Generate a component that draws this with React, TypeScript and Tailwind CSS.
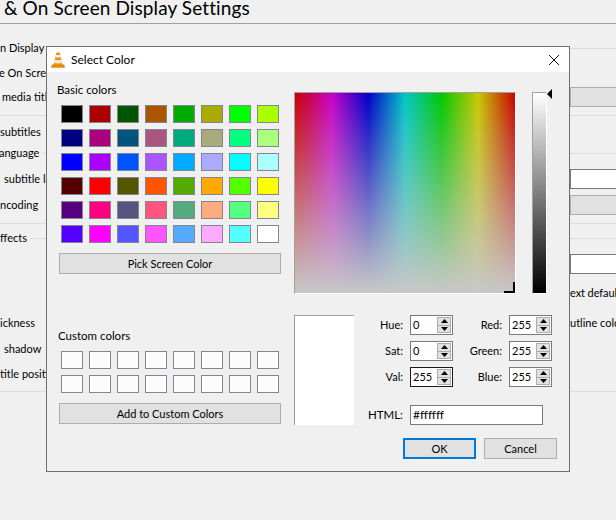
const basicColors = [
  ['#000000', '#aa0000', '#005500', '#aa5500', '#00aa00', '#aaaa00', '#00ff00', '#aaff00'],
  ['#00007f', '#aa007f', '#00557f', '#aa557f', '#00aa7f', '#aaaa7f', '#00ff7f', '#aaff7f'],
  ['#0000ff', '#aa00ff', '#0055ff', '#aa55ff', '#00aaff', '#aaaaff', '#00ffff', '#aaffff'],
  ['#550000', '#ff0000', '#555500', '#ff5500', '#55aa00', '#ffaa00', '#55ff00', '#ffff00'],
  ['#55007f', '#ff007f', '#55557f', '#ff557f', '#55aa7f', '#ffaa7f', '#55ff7f', '#ffff7f'],
  ['#5500ff', '#ff00ff', '#5555ff', '#ff55ff', '#55aaff', '#ffaaff', '#55ffff', '#ffffff'],
];

const FONT = "font-['Lato','Noto_Sans',sans-serif]";

function Swatch({ color }: { color: string }) {
  return <div className="h-[18px] w-[22px] border border-[#85858d]" style={{ backgroundColor: color }} />;
}

function PushButton({ label, wide, focused }: { label: string; wide?: boolean; focused?: boolean }) {
  return (
    <div
      className={`flex h-[21px] items-center justify-center bg-[#e1e1e1] pt-px text-[11px] text-black ${
        wide ? 'w-[222px]' : 'w-[73px]'
      } ${focused ? 'border-2 border-[#0078d7]' : 'border border-[#adadad]'}`}
    >
      {label}
    </div>
  );
}

function SpinBox({ value, focused }: { value: string; focused?: boolean }) {
  return (
    <div
      className={`flex h-5 w-[43px] items-center justify-between border bg-white pl-[2px] pr-px text-[11px] ${
        focused ? 'border-[#1a1a1a]' : 'border-[#7a7a7a]'
      }`}
    >
      <span>{value}</span>
      <div className="flex h-4 w-[14px] flex-col divide-y divide-[#adadad] border border-[#adadad] bg-[#e1e1e1]">
        <div className="flex flex-1 items-center justify-center">
          <svg width="7" height="4" viewBox="0 0 7 4"><path d="M3.5 0L7 4H0z" fill="#000" /></svg>
        </div>
        <div className="flex flex-1 items-center justify-center">
          <svg width="7" height="4" viewBox="0 0 7 4"><path d="M0 0h7L3.5 4z" fill="#000" /></svg>
        </div>
      </div>
    </div>
  );
}

function SpinRow({ label, value, labelWidth, focused }: { label: string; value: string; labelWidth: string; focused?: boolean }) {
  return (
    <div className="flex items-center gap-[7px]">
      <span className={`${labelWidth} text-right text-[11px]`}>{label}</span>
      <SpinBox value={value} focused={focused} />
    </div>
  );
}

function VlcCone() {
  return (
    <svg width="14" height="16" viewBox="0 0 14 16">
      <path d="M1 12.5h12l1 2.5q0 .8-.8.8H.8Q0 15.8 0 15z" fill="#e8860f" />
      <path d="M5.5.5h3L11.5 13q-4.5 1.4-9 0z" fill="#f28c0c" />
      <path d="M4.9 3h4.2l.6 2.5H4.3z" fill="#f3efe9" />
      <path d="M3.7 8h6.6l.7 3q-4 .8-8 0z" fill="#efebe6" />
    </svg>
  );
}

function Divider({ className }: { className: string }) {
  return <div className={`h-px bg-[#dcdcdc] ${className}`} />;
}

// The settings window behind the dialog, its labels run on under the dialog
function SettingsBehind() {
  return (
    <div className="flex h-[520px] w-[616px] flex-col overflow-hidden bg-[#f0f0f0] text-[11px] text-black">
      <div className="h-[24px] shrink-0 border-b border-[#a0a0a0] pl-1 text-[19px] leading-[16px] tracking-[0.1px] whitespace-nowrap">
        &amp; On Screen Display Settings
      </div>

      <div className="mt-[15px] flex h-[18px] shrink-0 items-center">
        <span className="whitespace-nowrap">n Display</span>
        <Divider className="ml-[3px] flex-1" />
      </div>
      <div className="mt-[7px] -ml-px flex h-[18px] shrink-0 items-center whitespace-nowrap">e On Screen</div>
      <div className="mt-[5px] flex h-5 shrink-0 items-center justify-between pl-[2px]">
        <span className="whitespace-nowrap">media title</span>
        <div className="h-5 w-[46px] border border-r-0 border-[#adadad] bg-[#e1e1e1]" />
      </div>
      <Divider className="mt-[8px] shrink-0" />

      <div className="mt-[8px] flex h-4 shrink-0 items-center whitespace-nowrap">subtitles</div>
      <div className="mt-[5px] flex h-4 shrink-0 items-center">
        <span className="-ml-px whitespace-nowrap">anguage</span>
        <Divider className="ml-[3px] flex-1" />
      </div>
      <div className="mt-[8px] flex h-5 shrink-0 items-center justify-between pl-[4px]">
        <span className="whitespace-nowrap">subtitle language</span>
        <div className="h-5 w-[46px] border border-r-0 border-[#7a7a7a] bg-white" />
      </div>
      <div className="mt-[6px] flex h-5 shrink-0 items-center justify-between">
        <span className="whitespace-nowrap">ncoding</span>
        <div className="h-5 w-[46px] border border-r-0 border-[#adadad] bg-[#e1e1e1]" />
      </div>
      <Divider className="mt-[8px] shrink-0" />
      <div className="mt-[6px] flex h-4 shrink-0 items-center">
        <span className="whitespace-nowrap">ffects</span>
        <Divider className="ml-[3px] flex-1" />
      </div>
      <div className="mt-[8px] flex h-5 shrink-0 justify-end">
        <div className="h-5 w-[46px] border border-r-0 border-[#7a7a7a] bg-white" />
      </div>
      <div className="mt-[11px] flex h-4 shrink-0 items-center pl-[570px] tracking-[-0.1px] whitespace-nowrap">ext default</div>
      <div className="mt-[14px] flex h-4 shrink-0 items-center">
        <span className="w-[570px] shrink-0 whitespace-nowrap">ickness</span>
        <span className="shrink-0 whitespace-nowrap">utline color</span>
      </div>
      <div className="mt-[10px] flex h-4 shrink-0 items-center pl-[4px] whitespace-nowrap">shadow</div>
      <div className="mt-[9px] flex h-4 shrink-0 items-center whitespace-nowrap">title position</div>
      <Divider className="mt-[9px] shrink-0" />
    </div>
  );
}

export default function App() {
  return (
    <div className={`${FONT} relative h-[520px] w-[616px] overflow-hidden text-black`}>
      <SettingsBehind />

      {/* Select Color dialog */}
      <div className="absolute left-[46px] top-[46px] h-[426px] w-[524px] border border-[#6e6e6e] bg-[#f0f0f0]">
        <div className="flex h-[25px] items-center justify-between bg-white pl-[4px] pr-[9px]">
          <div className="flex items-center gap-[6px]">
            <VlcCone />
            <span className="text-[12px]">Select Color</span>
          </div>
          <svg width="12" height="12" viewBox="0 0 12 12">
            <path d="M1 1l10 10M11 1L1 11" stroke="#111" strokeWidth="1" fill="none" />
          </svg>
        </div>

        <div className="flex pl-[12px] pt-[10px]">
          {/* left column */}
          <div className="flex w-[235px] flex-col">
            <div className="h-4 -translate-x-[2px] text-[11.5px] leading-4 whitespace-nowrap">Basic colors</div>
            <div className="mt-[7px] grid w-[218px] translate-x-[2px] grid-cols-8 gap-[6px]">
              {basicColors.flat().map((c, i) => (
                <Swatch key={i} color={c} />
              ))}
            </div>
            <div className="mt-[10px]">
              <PushButton label="Pick Screen Color" wide />
            </div>

            <div className="mt-[54px] h-4 -translate-x-[1px] text-[11.5px] leading-4 whitespace-nowrap">Custom colors</div>
            <div className="mt-[7px] grid w-[218px] translate-x-[2px] grid-cols-8 gap-[6px]">
              {Array.from({ length: 16 }).map((_, i) => (
                <Swatch key={i} color="#fcfcfc" />
              ))}
            </div>
            <div className="mt-[10px]">
              <PushButton label="Add to Custom Colors" wide />
            </div>
          </div>

          {/* right column */}
          <div className="mt-[10px] flex w-[263px] flex-col">
            <div className="flex">
              <div className="relative h-[202px] w-[222px] border border-t-[#a0a0a0] border-r-white border-b-white border-l-[#a0a0a0] bg-[linear-gradient(to_bottom,rgba(200,200,200,0),#c8c8c8),linear-gradient(to_right,#c80000,#c800c8,#0000c8,#00c8c8,#00c800,#c8c800,#c80000)]">
                <div className="absolute right-0 bottom-0 h-[11px] w-[2px] bg-black" />
                <div className="absolute right-0 bottom-0 h-[2px] w-[11px] bg-black" />
              </div>
              <div className="relative ml-[16px] h-[202px] w-[15px] border border-t-[#a0a0a0] border-r-white border-b-white border-l-[#a0a0a0] bg-[linear-gradient(to_bottom,#ffffff,#000000)]">
                <svg className="absolute -top-[4px] left-[14px]" width="6" height="10" viewBox="0 0 6 10">
                  <path d="M5 0v10L0 5z" fill="#000" />
                </svg>
              </div>
            </div>

            <div className="mt-[21px] flex">
              <div className="h-[110px] w-[60px] border-t border-l border-[#a0a0a0] bg-white" />
              <div className="ml-[12px] flex flex-col">
                <div className="grid w-[186px] grid-cols-[93px_93px]">
                  <div className="flex flex-col gap-[6px]">
                    <SpinRow label="Hue:" value="0" labelWidth="w-[37px]" />
                    <SpinRow label="Sat:" value="0" labelWidth="w-[37px]" />
                    <SpinRow label="Val:" value="255" labelWidth="w-[37px]" focused />
                  </div>
                  <div className="flex flex-col items-end gap-[6px]">
                    <SpinRow label="Red:" value="255" labelWidth="w-[43px]" />
                    <SpinRow label="Green:" value="255" labelWidth="w-[43px]" />
                    <SpinRow label="Blue:" value="255" labelWidth="w-[43px]" />
                  </div>
                </div>
                <div className="mt-[18px] flex items-center gap-[7px]">
                  <span className="w-[37px] text-right text-[11.5px]">HTML:</span>
                  <div className="flex h-5 w-[133px] items-center border border-[#7a7a7a] bg-white pl-[2px] text-[12px]">
                    #ffffff
                  </div>
                </div>
              </div>
            </div>

            <div className="mt-[13px] flex justify-end gap-[8px]">
              <PushButton label="OK" focused />
              <PushButton label="Cancel" />
            </div>
          </div>
        </div>
      </div>
    </div>
  );
}
